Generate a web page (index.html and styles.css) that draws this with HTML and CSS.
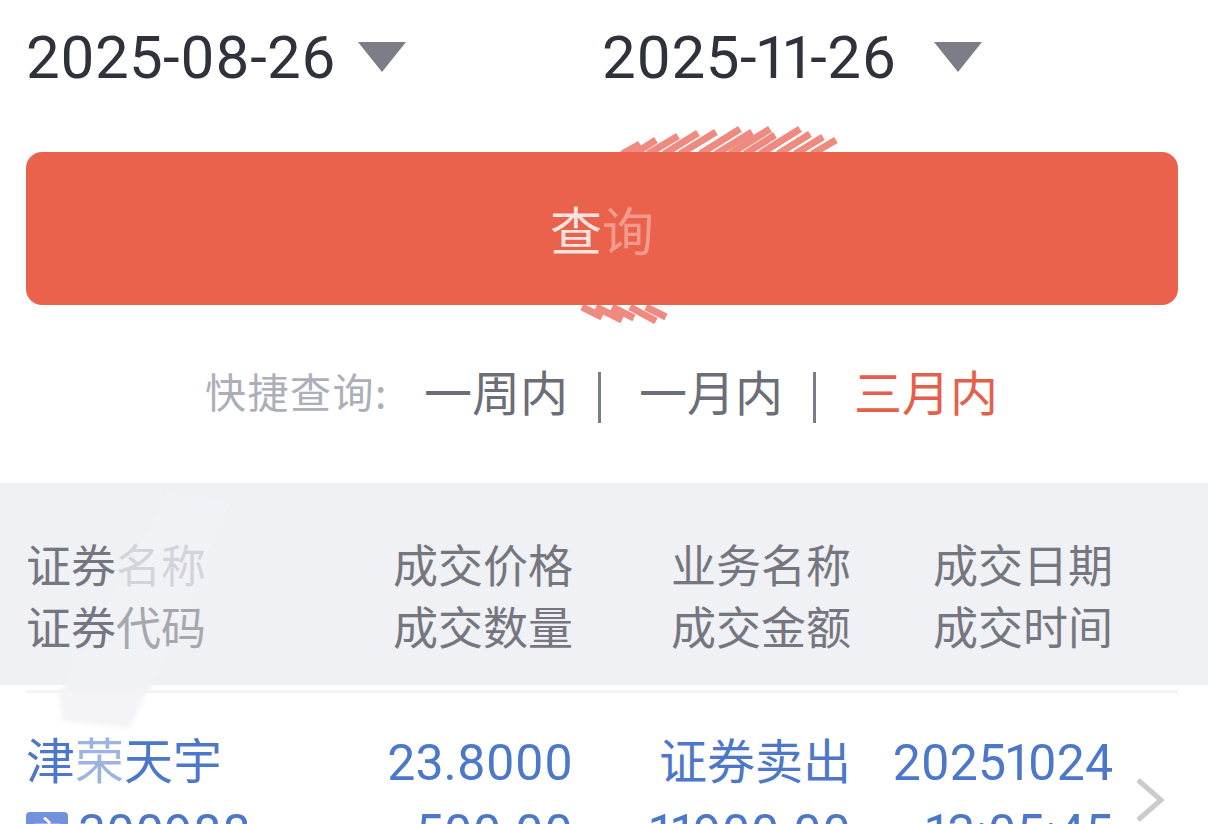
FILE: index.html
```html
<!DOCTYPE html>
<html lang="zh-CN">
<head>
<meta charset="utf-8">
<title>历史成交</title>
<link rel="stylesheet" href="styles.css">
</head>
<body>
<main class="page">
  <section class="dates">
    <div class="date date-start"><span>2025-08-26</span><i class="caret"></i></div>
    <div class="date date-end"><span>2025-11-26</span><i class="caret"></i></div>
  </section>
  <div class="query-wrap">
    <svg class="smudge" viewBox="0 0 1208 210" aria-hidden="true">
      <g stroke="#ef8a80" stroke-width="7" fill="none">
        <path d="M622 40l18-10M634 40l22-14M648 40l30-18M664 40l34-21M680 40l36-22M700 40l40-25M716 40l36-22M730 40l40-25M745 40l30-19M760 40l40-25M778 40l32-20M795 40l28-17M812 40l24-14"/>
        <path d="M582 193l20 10M596 193l26 13M612 193l22 11M630 193l26 14M646 193l20 10"/>
      </g>
    </svg>
    <button class="query"><span class="q1">查</span><span class="q2">询</span></button>
  </div>
  <nav class="quick">
    <span class="quick-label">快捷查询:</span>
    <a class="quick-item">一周内</a><i class="sep"></i>
    <a class="quick-item">一月内</a><i class="sep"></i>
    <a class="quick-item active">三月内</a>
  </nav>
  <section class="table">
    <svg class="wipe" viewBox="0 0 300 260" aria-hidden="true">
      <path d="M168 10L230 20L150 207H62Z" fill="#f1f2f6"/>
      <path d="M58 207H148L130 245L62 238Z" fill="#f4f4f6"/>
    </svg>
    <header class="thead">
      <div class="grid">
        <div class="cell first"><p>证券<span class="fade">名称</span></p><p>证券<span class="half">代码</span></p></div>
        <div class="cell"><p>成交价格</p><p>成交数量</p></div>
        <div class="cell"><p>业务名称</p><p>成交金额</p></div>
        <div class="cell"><p>成交日期</p><p>成交时间</p></div>
      </div>
    </header>
    <div class="rule"></div>
    <article class="row">
      <div class="grid">
        <div class="cell first"><p class="cjk name">津<span class="soft">荣</span>天宇</p><p class="code"><b class="tag">主</b>300988</p></div>
        <div class="cell"><p>23.8000</p><p>500.00</p></div>
        <div class="cell"><p class="cjk">证券卖出</p><p>11900.00</p></div>
        <div class="cell"><p>20251024</p><p>13:05:45</p></div>
      </div>
      <svg class="chevron" viewBox="0 0 30 46" aria-hidden="true"><path d="M3 3l23 20L3 43" fill="none" stroke="#cbcbcb" stroke-width="5"/></svg>
    </article>
  </section>
</main>
</body>
</html>
```
FILE: styles.css
```css
html, body {
  margin: 0;
  height: 100%;
  overflow: hidden;
  background: #fff;
}
.page {
  height: 824px;
  overflow: hidden;
  font-family: Roboto, "Noto Sans CJK SC", sans-serif;
  font-variant-numeric: proportional-nums;
}
.dates {
  display: flex;
  height: 115px;
  padding-left: 26px;
  align-items: center;
}
.date {
  display: flex;
  align-items: center;
  font-size: 60px;
  line-height: 70px;
  letter-spacing: 0.25px;
  color: #2f323c;
}
.date-start { width: 576px; }
.date-end { letter-spacing: 0.5px; }
.date-end .caret { margin-left: 38px; }
.caret {
  width: 0;
  height: 0;
  margin-left: 22px;
  margin-top: -2px;
  border-left: 24px solid transparent;
  border-right: 24px solid transparent;
  border-top: 30px solid #7b7d87;
}
.query-wrap {
  position: relative;
  padding: 37px 30px 0 26px;
}
.smudge {
  position: absolute;
  left: 0;
  top: 0;
  width: 1208px;
  height: 210px;
  margin-top: -1px;
}
.query {
  position: relative;
  display: flex;
  justify-content: center;
  align-items: center;
  width: 1152px;
  height: 153px;
  border: 0;
  border-radius: 16px;
  background: #ea614c;
  font: 400 52px/1 "Noto Sans CJK SC", sans-serif;
}
.q1 { color: #fbe3de; }
.q2 { color: #f29a8c; }
.quick {
  display: flex;
  align-items: center;
  height: 178px;
  padding: 0 0 9px 205px;
  box-sizing: border-box;
  font-family: "Noto Sans CJK SC", sans-serif;
}
.quick-label {
  width: 219px;
  font-size: 41px;
  letter-spacing: 1.5px;
  color: #adafb8;
}
.quick-item {
  font-size: 48px;
  line-height: 60px;
  color: #6b6d77;
}
.quick-item.active { color: #e4604b; }
.sep {
  width: 3px;
  height: 51px;
  margin: 15px 38px 0 30px;
  background: #7a7c86;
}
.table {
  position: relative;
  background: linear-gradient(#eff1f5 202px, #fff 202px);
}
.wipe {
  position: absolute;
  left: 0;
  top: 0;
  width: 300px;
  height: 260px;
  filter: blur(2px);
}
.thead {
  display: flex;
  align-items: center;
  box-sizing: border-box;
  height: 202px;
  padding-top: 30px;
  color: #75767f;
}
.grid {
  position: relative;
  display: grid;
  grid-template-columns: 245px 302px 278px 262px;
  width: 1087px;
  margin-left: 26px;
}
.cell { text-align: right; }
.cell.first { text-align: left; }
.cell p {
  margin: 0;
  height: 62px;
  white-space: nowrap;
  font-size: 45px;
  line-height: 62px;
}
.fade { color: #d3d4da; }
.half { color: #a6a7ae; }
.rule {
  position: relative;
  height: 3px;
  margin: 5px 30px 0 26px;
  background: #f2f3f5;
}
.row {
  position: relative;
  padding-top: 35px;
  color: #4d78c9;
}
.row .cell p {
  height: 70px;
  font-size: 50px;
  line-height: 70px;
}
.row .cell p.cjk { font-size: 48px; }
.row .cell p.name { font-size: 49px; }
.soft { color: #9db4e0; }
.code {
  display: flex;
  align-items: center;
}
.tag {
  display: inline-block;
  flex: none;
  width: 42px;
  height: 42px;
  margin-right: 10px;
  border-radius: 4px;
  background: #7391dd;
  color: #fff;
  font-size: 32px;
  font-weight: 400;
  line-height: 42px;
  text-align: center;
}
.chevron {
  position: absolute;
  left: 1135px;
  top: 84px;
  width: 30px;
  height: 46px;
}
```
